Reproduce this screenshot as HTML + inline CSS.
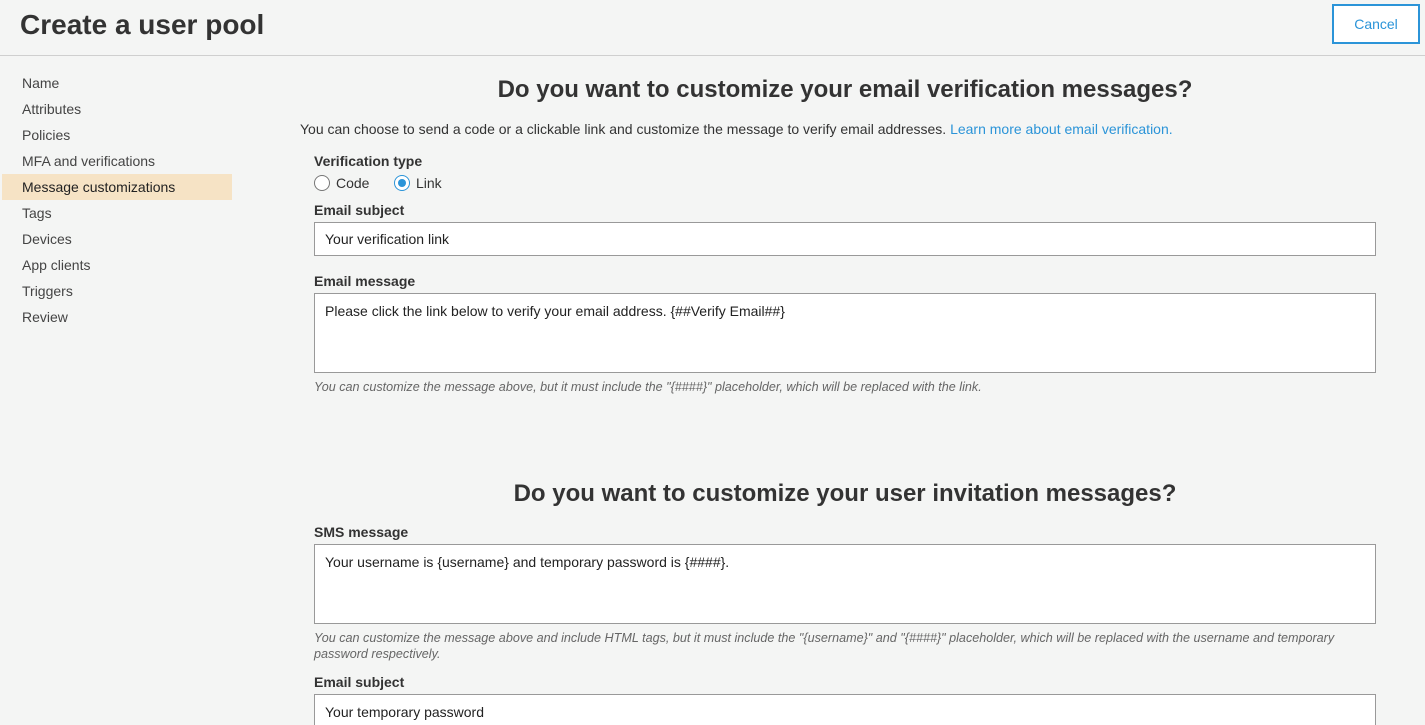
<!DOCTYPE html>
<html><head><style>
*{box-sizing:border-box;margin:0;padding:0}
html,body{width:1425px;height:725px;overflow:hidden}
body{background:#f4f5f4;font-family:"Liberation Sans",Arial,sans-serif;color:#222;position:relative}
.hdr{position:absolute;left:0;top:0;width:1425px;height:56px;border-bottom:1px solid #cfcfcf}
.hdr h1{position:absolute;left:20px;top:9px;font-size:28px;font-weight:bold;color:#333}
.cancel{position:absolute;left:1332px;top:4px;width:88px;height:40px;border:2px solid #2b94d8;background:#fff;color:#2b94d8;font-size:14px;text-align:center;line-height:36px}
.nav a{position:absolute;left:2px;width:230px;height:26px;padding-left:20px;font-size:14px;line-height:26px;color:#444}
.nav a.sel{background:#f6e3c5;color:#222}
.abs{position:absolute}
h2{position:absolute;font-size:24px;font-weight:bold;color:#333;width:1100px;text-align:center;left:295px}
.lbl{position:absolute;left:314px;font-size:14px;font-weight:bold;color:#333}
.box{position:absolute;left:314px;width:1062px;border:1px solid #999;background:#fff;font-size:14px;padding:0 10px;color:#222}
.hint{position:absolute;left:314px;font-size:12.6px;font-style:italic;color:#666;width:1062px;line-height:16px}
.radio{position:absolute;width:16px;height:16px;border-radius:50%;border:1px solid #777;background:#fff}
</style></head><body>
<div class="hdr"><h1>Create a user pool</h1><div class="cancel">Cancel</div></div>
<div class="nav">
<a style="top:70px">Name</a><a style="top:96px">Attributes</a><a style="top:122px">Policies</a><a style="top:148px">MFA and verifications</a><a class="sel" style="top:174px">Message customizations</a><a style="top:200px">Tags</a><a style="top:226px">Devices</a><a style="top:252px">App clients</a><a style="top:278px">Triggers</a><a style="top:304px">Review</a>
</div>
<h2 style="top:76px">Do you want to customize your email verification messages?</h2>
<div class="abs" style="left:300px;top:121px;font-size:14px;color:#333">You can choose to send a code or a clickable link and customize the message to verify email addresses. <span style="color:#2b94d8">Learn more about email verification.</span></div>
<div class="lbl" style="top:153px">Verification type</div>
<div class="radio" style="left:314px;top:175px"></div><div class="abs" style="left:336px;top:175px;font-size:14px;color:#333">Code</div>
<div class="radio" style="left:394px;top:175px;border-color:#2b94d8"><div style="position:absolute;left:3px;top:3px;width:8px;height:8px;border-radius:50%;background:#2b94d8"></div></div><div class="abs" style="left:416px;top:175px;font-size:14px;color:#333">Link</div>
<div class="lbl" style="top:202px">Email subject</div>
<div class="box" style="top:222px;height:34px;line-height:32px">Your verification link</div>
<div class="lbl" style="top:273px">Email message</div>
<div class="box" style="top:293px;height:80px;padding-top:9px">Please click the link below to verify your email address. {##Verify Email##}</div>
<div class="hint" style="top:379px">You can customize the message above, but it must include the "{####}" placeholder, which will be replaced with the link.</div>
<h2 style="top:480px">Do you want to customize your user invitation messages?</h2>
<div class="lbl" style="top:524px">SMS message</div>
<div class="box" style="top:544px;height:80px;padding-top:9px">Your username is {username} and temporary password is {####}.</div>
<div class="hint" style="top:630px">You can customize the message above and include HTML tags, but it must include the "{username}" and "{####}" placeholder, which will be replaced with the username and temporary password respectively.</div>
<div class="lbl" style="top:674px">Email subject</div>
<div class="box" style="top:694px;height:40px;line-height:34px">Your temporary password</div>
</body></html>
